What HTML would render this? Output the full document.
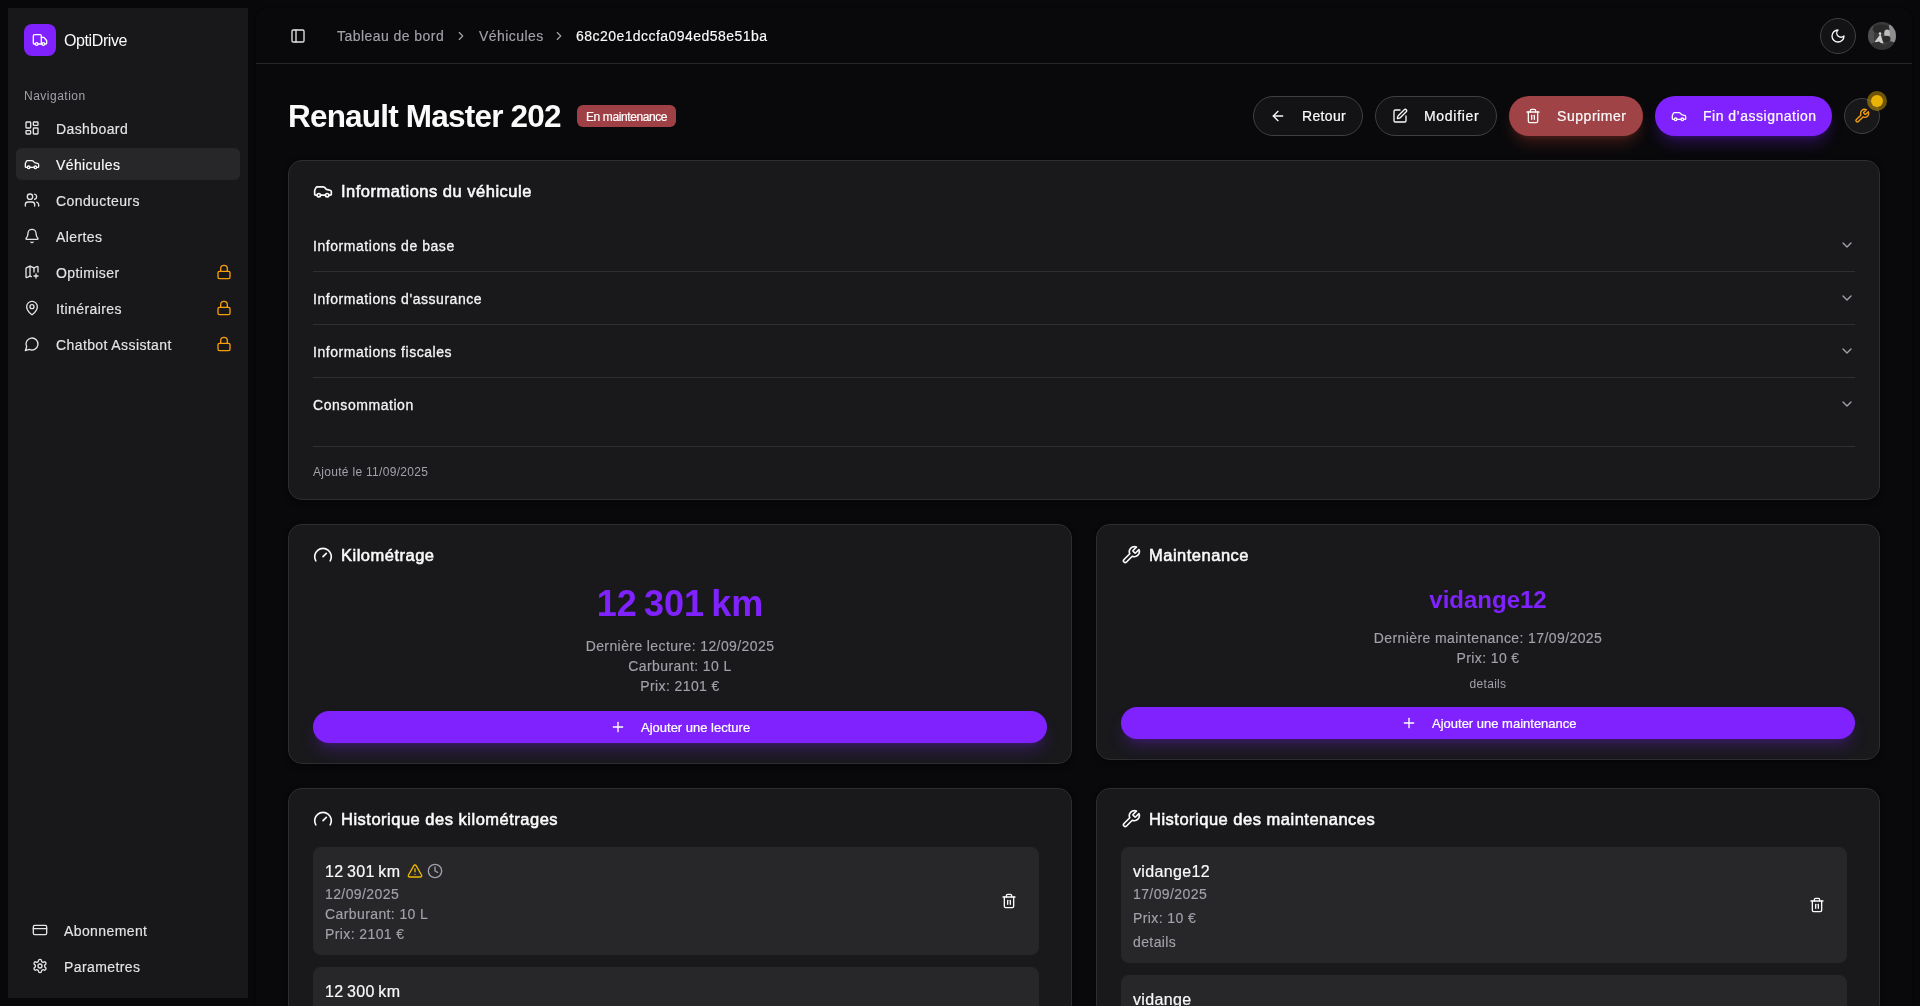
<!DOCTYPE html>
<html lang="fr">
<head>
<meta charset="utf-8">
<style>
*{box-sizing:border-box;margin:0;padding:0}
html,body{width:1920px;height:1006px;overflow:hidden}
body{background:#08080a;font-family:"Liberation Sans",sans-serif;color:#fafafa;position:relative}
svg{display:block;fill:none;stroke:currentColor;stroke-width:2;stroke-linecap:round;stroke-linejoin:round}
.abs{position:absolute}
#sb{position:absolute;left:8px;top:8px;width:240px;height:990px;background:#18181b}
.logo{position:absolute;left:16px;top:16px;width:32px;height:32px;border-radius:8px;background:#7f22fe;color:#fff}
.logo svg{position:absolute;left:8px;top:8px}
.brand{position:absolute;left:56px;top:23px;font-size:16px;line-height:20px;color:#fafafa;letter-spacing:-.4px}
.navlbl{position:absolute;left:16px;top:81px;font-size:12px;line-height:14px;color:#a1a1aa;letter-spacing:.5px}
.nav{position:absolute;left:8px;width:224px;height:32px;border-radius:6px;color:#e4e4e7;font-size:14px}
.nav.act{background:#27272a;color:#fafafa}
.nav svg{position:absolute;left:8px;top:8px}
.nav span{position:absolute;left:40px;top:9px;line-height:16px;letter-spacing:.4px;-webkit-text-stroke:.15px currentColor}
.nav .lock{position:absolute;left:200px;top:8px;color:#f59e0b}
#main{position:absolute;left:256px;top:8px;width:1656px;height:1010px;background:#09090b;border-radius:12px;box-shadow:0 1px 3px rgba(0,0,0,.6)}
.hdr{position:absolute;left:0;top:0;width:1656px;height:56px;border-bottom:1px solid #27272a}

.t{position:absolute;white-space:nowrap}
.ic{position:absolute}
.bc{font-size:14px;line-height:20px;color:#a1a1aa;letter-spacing:.45px;-webkit-text-stroke:.15px currentColor}
.btn{position:absolute;height:40px;border-radius:20px;font-size:14px;line-height:16px;color:#fafafa}
.btn.o{border:1px solid #3f3f46;background:#131316}
.btn.o svg,.btn.o span{top:11px}
.btn svg{position:absolute;top:12px}
.btn span{position:absolute;top:12px;white-space:nowrap;letter-spacing:.35px;-webkit-text-stroke:.22px currentColor}
.card{position:absolute;background:#19191c;border:1px solid #2e2e31;border-radius:14px;box-shadow:0 2px 6px rgba(0,0,0,.45)}
.ctitle{font-size:16.5px;line-height:20px;font-weight:400;color:#fafafa;letter-spacing:.5px;-webkit-text-stroke:.55px #fafafa}
.acc{font-size:14px;line-height:20px;color:#f4f4f5;letter-spacing:.55px;-webkit-text-stroke:.3px #f4f4f5}
.sep{position:absolute;height:1px;background:#2e2e33}
.mut{color:#a1a1aa;font-size:14px;line-height:20px;letter-spacing:.4px;-webkit-text-stroke:.15px currentColor}
.pbtn{position:absolute;height:32px;border-radius:16px;background:#7f22fe;box-shadow:0 10px 15px -3px rgba(127,34,254,.25),0 4px 6px -4px rgba(127,34,254,.25);color:#fff;font-size:13px;line-height:16px}
.pbtn svg{position:absolute;top:8px}
.pbtn span{position:absolute;top:9px;letter-spacing:0;white-space:nowrap;-webkit-text-stroke:.22px currentColor}
.item{position:absolute;background:#27272a;border-radius:8px}
</style>
</head>
<body>
<div id="wrap" style="position:absolute;left:0;top:0;width:1920px;height:1006px;will-change:transform">
<div id="sb">
  <div class="logo"><svg width="16" height="16" viewBox="0 0 24 24"><path d="M14 18V6a2 2 0 0 0-2-2H4a2 2 0 0 0-2 2v11a1 1 0 0 0 1 1h2"/><path d="M15 18H9"/><path d="M19 18h2a1 1 0 0 0 1-1v-3.65a1 1 0 0 0-.22-.624l-3.48-4.35A1 1 0 0 0 17.52 8H14"/><circle cx="17" cy="18" r="2"/><circle cx="7" cy="18" r="2"/></svg></div>
  <div class="brand">OptiDrive</div>
  <div class="navlbl">Navigation</div>
  <div class="nav" style="top:104px"><svg width="16" height="16" viewBox="0 0 24 24"><rect width="7" height="9" x="3" y="3" rx="1"/><rect width="7" height="5" x="14" y="3" rx="1"/><rect width="7" height="9" x="14" y="12" rx="1"/><rect width="7" height="5" x="3" y="16" rx="1"/></svg><span>Dashboard</span></div>
  <div class="nav act" style="top:140px"><svg width="16" height="16" viewBox="0 0 24 24"><path d="M19 17h2c.6 0 1-.4 1-1v-3c0-.9-.7-1.7-1.5-1.9C18.7 10.6 16 10 16 10s-1.3-1.4-2.2-2.3c-.5-.4-1.1-.7-1.8-.7H5c-.6 0-1.1.4-1.4.9l-1.4 2.9A3.7 3.7 0 0 0 2 12v4c0 .6.4 1 1 1h2"/><circle cx="7" cy="17" r="2"/><path d="M9 17h6"/><circle cx="17" cy="17" r="2"/></svg><span>Véhicules</span></div>
  <div class="nav" style="top:176px"><svg width="16" height="16" viewBox="0 0 24 24"><path d="M16 21v-2a4 4 0 0 0-4-4H6a4 4 0 0 0-4 4v2"/><circle cx="9" cy="7" r="4"/><path d="M22 21v-2a4 4 0 0 0-3-3.87"/><path d="M16 3.13a4 4 0 0 1 0 7.75"/></svg><span>Conducteurs</span></div>
  <div class="nav" style="top:212px"><svg width="16" height="16" viewBox="0 0 24 24"><path d="M10.268 21a2 2 0 0 0 3.464 0"/><path d="M3.262 15.326A1 1 0 0 0 4 17h16a1 1 0 0 0 .74-1.673C19.41 13.956 18 12.499 18 8A6 6 0 0 0 6 8c0 4.499-1.411 5.956-2.738 7.326"/></svg><span>Alertes</span></div>
  <div class="nav" style="top:248px"><svg width="16" height="16" viewBox="0 0 24 24"><path d="m11 19-1.106-.552a2 2 0 0 0-1.788 0l-3.659 1.83A1 1 0 0 1 3 19.381V6.618a1 1 0 0 1 .553-.894l4.553-2.277a2 2 0 0 1 1.788 0l4.212 2.106a2 2 0 0 0 1.788 0l3.659-1.83A1 1 0 0 1 21 4.619V12"/><path d="M15 5.764V12"/><path d="M18 15v6"/><path d="M21 18h-6"/><path d="M9 3.236v15"/></svg><span>Optimiser</span><svg class="lock" width="16" height="16" viewBox="0 0 24 24"><rect width="18" height="11" x="3" y="11" rx="2" ry="2"/><path d="M7 11V7a5 5 0 0 1 10 0v4"/></svg></div>
  <div class="nav" style="top:284px"><svg width="16" height="16" viewBox="0 0 24 24"><path d="M20 10c0 4.993-5.539 10.193-7.399 11.799a1 1 0 0 1-1.202 0C9.539 20.193 4 14.993 4 10a8 8 0 0 1 16 0"/><circle cx="12" cy="10" r="3"/></svg><span>Itinéraires</span><svg class="lock" width="16" height="16" viewBox="0 0 24 24"><rect width="18" height="11" x="3" y="11" rx="2" ry="2"/><path d="M7 11V7a5 5 0 0 1 10 0v4"/></svg></div>
  <div class="nav" style="top:320px"><svg width="16" height="16" viewBox="0 0 24 24"><path d="M7.9 20A9 9 0 1 0 4 16.1L2 22Z"/></svg><span>Chatbot Assistant</span><svg class="lock" width="16" height="16" viewBox="0 0 24 24"><rect width="18" height="11" x="3" y="11" rx="2" ry="2"/><path d="M7 11V7a5 5 0 0 1 10 0v4"/></svg></div>
  <div class="nav" style="top:906px;left:16px;width:208px"><svg width="16" height="16" viewBox="0 0 24 24"><rect width="20" height="14" x="2" y="5" rx="2"/><line x1="2" x2="22" y1="10" y2="10"/></svg><span>Abonnement</span></div>
  <div class="nav" style="top:942px;left:16px;width:208px"><svg width="16" height="16" viewBox="0 0 24 24"><path d="M12.22 2h-.44a2 2 0 0 0-2 2v.18a2 2 0 0 1-1 1.73l-.43.25a2 2 0 0 1-2 0l-.15-.08a2 2 0 0 0-2.73.73l-.22.38a2 2 0 0 0 .73 2.73l.15.1a2 2 0 0 1 1 1.72v.51a2 2 0 0 1-1 1.74l-.15.09a2 2 0 0 0-.73 2.730l.22.38a2 2 0 0 0 2.73.73l.15-.08a2 2 0 0 1 2 0l.43.25a2 2 0 0 1 1 1.73V20a2 2 0 0 0 2 2h.44a2 2 0 0 0 2-2v-.18a2 2 0 0 1 1-1.73l.43-.25a2 2 0 0 1 2 0l.15.08a2 2 0 0 0 2.73-.73l.22-.39a2 2 0 0 0-.73-2.73l-.15-.08a2 2 0 0 1-1-1.74v-.5a2 2 0 0 1 1-1.74l.15-.09a2 2 0 0 0 .73-2.73l-.22-.38a2 2 0 0 0-2.73-.73l-.15.08a2 2 0 0 1-2 0l-.43-.25a2 2 0 0 1-1-1.73V4a2 2 0 0 0-2-2z"/><circle cx="12" cy="12" r="3"/></svg><span>Parametres</span></div>
</div>
<div id="main">
  <div class="hdr"></div>
</div>

<!-- header -->
<svg class="ic" style="left:290px;top:28px" width="16" height="16" viewBox="0 0 24 24" color="#e4e4e7"><rect width="18" height="18" x="3" y="3" rx="2"/><path d="M9 3v18"/></svg>
<div class="t bc" style="left:337px;top:26px">Tableau de bord</div>
<svg class="ic" style="left:454px;top:29px" width="14" height="14" viewBox="0 0 24 24" color="#a1a1aa"><path d="m9 18 6-6-6-6"/></svg>
<div class="t bc" style="left:479px;top:26px">Véhicules</div>
<svg class="ic" style="left:552px;top:29px" width="14" height="14" viewBox="0 0 24 24" color="#a1a1aa"><path d="m9 18 6-6-6-6"/></svg>
<div class="t bc" style="left:576px;top:26px;color:#fafafa">68c20e1dccfa094ed58e51ba</div>
<div class="abs" style="left:1820px;top:18px;width:36px;height:36px;border-radius:50%;border:1px solid #3f3f46;background:#131316"></div>
<svg class="ic" style="left:1830px;top:28px" width="16" height="16" viewBox="0 0 24 24" color="#fafafa"><path d="M12 3a6 6 0 0 0 9 9 9 9 0 1 1-9-9Z"/></svg>
<svg class="ic" style="left:1868px;top:22px;stroke:none" width="28" height="28" viewBox="0 0 28 28"><defs><clipPath id="av"><circle cx="14" cy="14" r="14"/></clipPath><filter id="avb" x="-10%" y="-10%" width="120%" height="120%"><feGaussianBlur stdDeviation="0.5"/></filter></defs><g clip-path="url(#av)"><g filter="url(#avb)" style="stroke:none"><rect width="28" height="28" fill="#3a3a3a"/><rect x="0" y="4" width="6" height="18" fill="#505050"/><rect x="21" y="3" width="7" height="18" fill="#8e8e8e"/><ellipse cx="13" cy="7" rx="8.5" ry="4.5" fill="#2a2a2a"/><polygon points="6.5,20 12.5,12 15.5,21.5" fill="#cfcfcf"/><ellipse cx="19" cy="11.5" rx="2.8" ry="4" fill="#bcbcbc"/><ellipse cx="18.5" cy="17" rx="4" ry="3.2" fill="#2c2c2c"/><circle cx="12" cy="11.5" r="1.3" fill="#d8d8d8"/><polygon points="1,22 11,19.5 17,24 22,19 28,21 28,28 0,28" fill="#333"/></g></g></svg>

<!-- title -->
<div class="t" style="left:288px;top:98px;font-size:31.5px;line-height:36px;font-weight:700;color:#fafafa;letter-spacing:-.8px">Renault Master 202</div>
<div class="abs" style="left:577px;top:105px;width:99px;height:22px;border-radius:6px;background:#9e4045"></div>
<div class="t" style="left:586px;top:109px;font-size:12px;line-height:16px;color:#fff;letter-spacing:-.4px;-webkit-text-stroke:.2px #fff">En maintenance</div>

<div class="btn o" style="left:1253px;top:96px;width:110px"><svg style="left:16px" width="16" height="16" viewBox="0 0 24 24"><path d="m12 19-7-7 7-7"/><path d="M19 12H5"/></svg><span style="left:48px">Retour</span></div>
<div class="btn o" style="left:1375px;top:96px;width:122px"><svg style="left:16px" width="16" height="16" viewBox="0 0 24 24"><path d="M12 3H5a2 2 0 0 0-2 2v14a2 2 0 0 0 2 2h14a2 2 0 0 0 2-2v-7"/><path d="M18.375 2.625a1 1 0 0 1 3 3l-9.013 9.014a2 2 0 0 1-.853.505l-2.873.84a.5.5 0 0 1-.62-.62l.84-2.873a2 2 0 0 1 .506-.852z"/></svg><span style="left:48px;letter-spacing:.7px">Modifier</span></div>
<div class="btn" style="left:1509px;top:96px;width:134px;background:#a04346;box-shadow:0 10px 15px -3px rgba(230,80,60,.22),0 4px 6px -4px rgba(230,80,60,.22)"><svg style="left:16px" width="16" height="16" viewBox="0 0 24 24"><path d="M3 6h18"/><path d="M19 6v14c0 1-1 2-2 2H7c-1 0-2-1-2-2V6"/><path d="M8 6V4c0-1 1-2 2-2h4c1 0 2 1 2 2v2"/><line x1="10" x2="10" y1="11" y2="17"/><line x1="14" x2="14" y1="11" y2="17"/></svg><span style="left:48px;letter-spacing:.55px">Supprimer</span></div>
<div class="btn" style="left:1655px;top:96px;width:177px;background:#7f22fe;box-shadow:0 10px 15px -3px rgba(127,34,254,.28),0 4px 6px -4px rgba(127,34,254,.28)"><svg style="left:16px" width="16" height="16" viewBox="0 0 24 24"><path d="M19 17h2c.6 0 1-.4 1-1v-3c0-.9-.7-1.7-1.5-1.9C18.7 10.6 16 10 16 10s-1.3-1.4-2.2-2.3c-.5-.4-1.1-.7-1.8-.7H5c-.6 0-1.1.4-1.4.9l-1.4 2.9A3.7 3.7 0 0 0 2 12v4c0 .6.4 1 1 1h2"/><circle cx="7" cy="17" r="2"/><path d="M9 17h6"/><circle cx="17" cy="17" r="2"/></svg><span style="left:48px;letter-spacing:.5px">Fin d’assignation</span></div>
<div class="abs" style="left:1844px;top:98px;width:36px;height:36px;border-radius:50%;border:1px solid #3f3f46;background:#18181b"></div>
<svg class="ic" style="left:1854px;top:108px" width="16" height="16" viewBox="0 0 24 24" color="#f59e0b"><path d="M14.7 6.3a1 1 0 0 0 0 1.4l1.6 1.6a1 1 0 0 0 1.4 0l3.77-3.77a6 6 0 0 1-7.94 7.94l-6.91 6.91a2.12 2.12 0 0 1-3-3l6.91-6.91a6 6 0 0 1 7.94-7.94l-3.76 3.76z"/></svg>
<div class="abs" style="left:1867px;top:91px;width:20px;height:20px;border-radius:50%;background:rgba(234,179,8,.45)"></div>
<div class="abs" style="left:1871px;top:95px;width:12px;height:12px;border-radius:50%;background:#eab308"></div>

<!-- vehicle info card -->
<div class="card" style="left:288px;top:160px;width:1592px;height:340px"></div>
<svg class="ic" style="left:313px;top:181px" width="20" height="20" viewBox="0 0 24 24" color="#fafafa"><path d="M19 17h2c.6 0 1-.4 1-1v-3c0-.9-.7-1.7-1.5-1.9C18.7 10.6 16 10 16 10s-1.3-1.4-2.2-2.3c-.5-.4-1.1-.7-1.8-.7H5c-.6 0-1.1.4-1.4.9l-1.4 2.9A3.7 3.7 0 0 0 2 12v4c0 .6.4 1 1 1h2"/><circle cx="7" cy="17" r="2"/><path d="M9 17h6"/><circle cx="17" cy="17" r="2"/></svg>
<div class="t ctitle" style="left:341px;top:181px">Informations du véhicule</div>
<div class="t acc" style="left:313px;top:236px">Informations de base</div>
<div class="sep" style="left:313px;top:271px;width:1542px"></div>
<div class="t acc" style="left:313px;top:289px">Informations d'assurance</div>
<div class="sep" style="left:313px;top:324px;width:1542px"></div>
<div class="t acc" style="left:313px;top:342px">Informations fiscales</div>
<div class="sep" style="left:313px;top:377px;width:1542px"></div>
<div class="t acc" style="left:313px;top:395px">Consommation</div>
<div class="sep" style="left:313px;top:446px;width:1542px"></div>
<div class="t" style="left:313px;top:464px;font-size:12px;line-height:16px;color:#a1a1aa;letter-spacing:.3px">Ajouté le 11/09/2025</div>
<svg class="ic" style="left:1839px;top:237px" width="16" height="16" viewBox="0 0 24 24" color="#a1a1aa"><path d="m6 9 6 6 6-6"/></svg>
<svg class="ic" style="left:1839px;top:290px" width="16" height="16" viewBox="0 0 24 24" color="#a1a1aa"><path d="m6 9 6 6 6-6"/></svg>
<svg class="ic" style="left:1839px;top:343px" width="16" height="16" viewBox="0 0 24 24" color="#a1a1aa"><path d="m6 9 6 6 6-6"/></svg>
<svg class="ic" style="left:1839px;top:396px" width="16" height="16" viewBox="0 0 24 24" color="#a1a1aa"><path d="m6 9 6 6 6-6"/></svg>

<!-- kilometrage card -->
<div class="card" style="left:288px;top:524px;width:784px;height:240px"></div>
<svg class="ic" style="left:313px;top:545px" width="20" height="20" viewBox="0 0 24 24" color="#fafafa"><path d="m12 14 4-4"/><path d="M3.34 19a10 10 0 1 1 17.32 0"/></svg>
<div class="t ctitle" style="left:341px;top:545px">Kilométrage</div>
<div class="t" style="left:288px;width:784px;text-align:center;top:583px;font-size:36px;line-height:42px;font-weight:700;color:#7f22fe">12&#8239;301&#8239;km</div>
<div class="t mut" style="left:288px;width:784px;text-align:center;top:636px">Dernière lecture: 12/09/2025</div>
<div class="t mut" style="left:288px;width:784px;text-align:center;top:656px">Carburant: 10 L</div>
<div class="t mut" style="left:288px;width:784px;text-align:center;top:676px">Prix: 2101 €</div>
<div class="pbtn" style="left:313px;top:711px;width:734px"><svg style="left:297px" width="16" height="16" viewBox="0 0 24 24"><path d="M5 12h14"/><path d="M12 5v14"/></svg><span style="left:328px">Ajouter une lecture</span></div>

<!-- maintenance card -->
<div class="card" style="left:1096px;top:524px;width:784px;height:236px"></div>
<svg class="ic" style="left:1121px;top:545px" width="20" height="20" viewBox="0 0 24 24" color="#fafafa"><path d="M14.7 6.3a1 1 0 0 0 0 1.4l1.6 1.6a1 1 0 0 0 1.4 0l3.77-3.77a6 6 0 0 1-7.94 7.94l-6.91 6.91a2.12 2.12 0 0 1-3-3l6.91-6.91a6 6 0 0 1 7.94-7.94l-3.76 3.76z"/></svg>
<div class="t ctitle" style="left:1149px;top:545px">Maintenance</div>
<div class="t" style="left:1096px;width:784px;text-align:center;top:586px;font-size:24px;line-height:28px;font-weight:700;color:#7f22fe">vidange12</div>
<div class="t mut" style="left:1096px;width:784px;text-align:center;top:628px">Dernière maintenance: 17/09/2025</div>
<div class="t mut" style="left:1096px;width:784px;text-align:center;top:648px">Prix: 10 €</div>
<div class="t" style="left:1096px;width:784px;text-align:center;top:676px;font-size:12px;line-height:16px;color:#a1a1aa;letter-spacing:.3px">details</div>
<div class="pbtn" style="left:1121px;top:707px;width:734px"><svg style="left:280px" width="16" height="16" viewBox="0 0 24 24"><path d="M5 12h14"/><path d="M12 5v14"/></svg><span style="left:311px;letter-spacing:0">Ajouter une maintenance</span></div>

<!-- historique km -->
<div class="card" style="left:288px;top:788px;width:784px;height:260px"></div>
<svg class="ic" style="left:313px;top:809px" width="20" height="20" viewBox="0 0 24 24" color="#fafafa"><path d="m12 14 4-4"/><path d="M3.34 19a10 10 0 1 1 17.32 0"/></svg>
<div class="t ctitle" style="left:341px;top:809px">Historique des kilométrages</div>
<div class="item" style="left:313px;top:847px;width:726px;height:108px"></div>
<div class="t" style="left:325px;top:862px;font-size:16px;line-height:20px;color:#fafafa;letter-spacing:.35px;-webkit-text-stroke:.2px #fafafa">12&#8239;301&#8239;km</div>
<svg class="ic" style="left:407px;top:863px" width="16" height="16" viewBox="0 0 24 24" color="#f0b800"><path d="m21.73 18-8-14a2 2 0 0 0-3.48 0l-8 14A2 2 0 0 0 4 21h16a2 2 0 0 0 1.73-3"/><path d="M12 9v4"/><path d="M12 17h.01"/></svg>
<svg class="ic" style="left:427px;top:863px" width="16" height="16" viewBox="0 0 24 24" color="#a1a1aa"><circle cx="12" cy="12" r="10"/><polyline points="12 6 12 12 16 14"/></svg>
<div class="t mut" style="left:325px;top:884px">12/09/2025</div>
<div class="t mut" style="left:325px;top:904px">Carburant: 10 L</div>
<div class="t mut" style="left:325px;top:924px">Prix: 2101 €</div>
<svg class="ic" style="left:1001px;top:893px" width="16" height="16" viewBox="0 0 24 24" color="#fafafa"><path d="M3 6h18"/><path d="M19 6v14c0 1-1 2-2 2H7c-1 0-2-1-2-2V6"/><path d="M8 6V4c0-1 1-2 2-2h4c1 0 2 1 2 2v2"/><line x1="10" x2="10" y1="11" y2="17"/><line x1="14" x2="14" y1="11" y2="17"/></svg>
<div class="item" style="left:313px;top:967px;width:726px;height:108px"></div>
<div class="t" style="left:325px;top:982px;font-size:16px;line-height:20px;color:#fafafa;letter-spacing:.35px;-webkit-text-stroke:.2px #fafafa">12&#8239;300&#8239;km</div>

<!-- historique maintenance -->
<div class="card" style="left:1096px;top:788px;width:784px;height:260px"></div>
<svg class="ic" style="left:1121px;top:809px" width="20" height="20" viewBox="0 0 24 24" color="#fafafa"><path d="M14.7 6.3a1 1 0 0 0 0 1.4l1.6 1.6a1 1 0 0 0 1.4 0l3.77-3.77a6 6 0 0 1-7.94 7.94l-6.91 6.91a2.12 2.12 0 0 1-3-3l6.91-6.91a6 6 0 0 1 7.94-7.94l-3.76 3.76z"/></svg>
<div class="t ctitle" style="left:1149px;top:809px">Historique des maintenances</div>
<div class="item" style="left:1121px;top:847px;width:726px;height:116px"></div>
<div class="t" style="left:1133px;top:862px;font-size:16px;line-height:20px;color:#fafafa;letter-spacing:.35px;-webkit-text-stroke:.2px #fafafa">vidange12</div>
<div class="t mut" style="left:1133px;top:884px">17/09/2025</div>
<div class="t mut" style="left:1133px;top:908px">Prix: 10 €</div>
<div class="t mut" style="left:1133px;top:932px">details</div>
<svg class="ic" style="left:1809px;top:897px" width="16" height="16" viewBox="0 0 24 24" color="#fafafa"><path d="M3 6h18"/><path d="M19 6v14c0 1-1 2-2 2H7c-1 0-2-1-2-2V6"/><path d="M8 6V4c0-1 1-2 2-2h4c1 0 2 1 2 2v2"/><line x1="10" x2="10" y1="11" y2="17"/><line x1="14" x2="14" y1="11" y2="17"/></svg>
<div class="item" style="left:1121px;top:975px;width:726px;height:116px"></div>
<div class="t" style="left:1133px;top:990px;font-size:16px;line-height:20px;color:#fafafa;letter-spacing:.35px;-webkit-text-stroke:.2px #fafafa">vidange</div>
</div>
</body>
</html>
